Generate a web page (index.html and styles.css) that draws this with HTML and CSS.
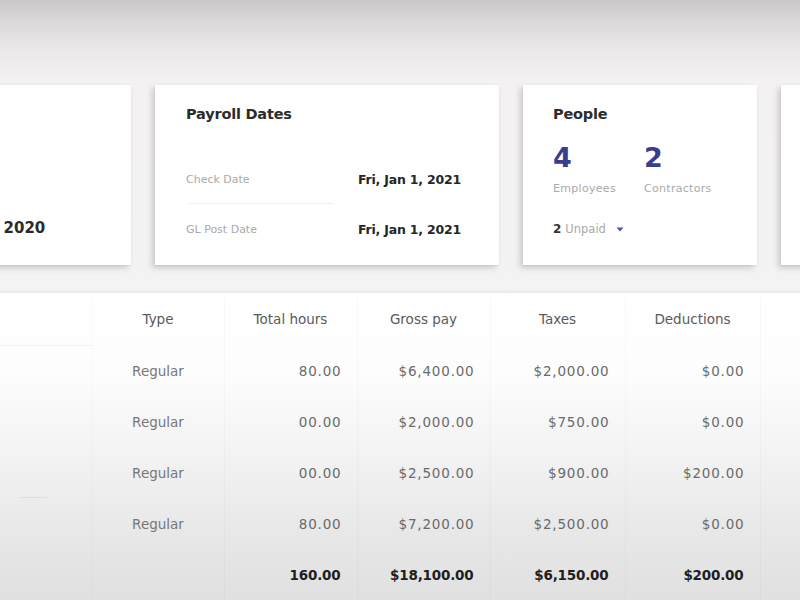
FILE: index.html
```html
<!DOCTYPE html>
<html>
<head>
<meta charset="utf-8">
<link rel="stylesheet" href="styles.css">
</head>
<body>
<div class="page">
  <div class="cards">
    <div class="card card-a">
      <div class="period">Dec 17, 2020</div>
    </div>
    <div class="card card-b">
      <div class="card-title">Payroll Dates</div>
      <div class="date-row first">
        <span class="label">Check Date</span>
        <span class="value">Fri, Jan 1, 2021</span>
      </div>
      <div class="divider"></div>
      <div class="date-row">
        <span class="label">GL Post Date</span>
        <span class="value">Fri, Jan 1, 2021</span>
      </div>
    </div>
    <div class="card card-c">
      <div class="card-title">People</div>
      <div class="counts">
        <div class="count first-count">
          <div class="num">4</div>
          <div class="label">Employees</div>
        </div>
        <div class="count">
          <div class="num">2</div>
          <div class="label">Contractors</div>
        </div>
      </div>
      <div class="unpaid"><b>2</b> <span class="label">Unpaid</span>
        <svg class="caret" width="8" height="5" viewBox="0 0 8 5"><path d="M0.5 0.5 L7.5 0.5 L4 4.5 Z" fill="#4a55a8"/></svg>
      </div>
    </div>
    <div class="card card-d"></div>
  </div>

  <div class="table-wrap">
    <table class="grid">
      <colgroup>
        <col class="c0"><col class="c1"><col class="c2"><col class="c3"><col class="c4"><col class="c5"><col class="c6">
      </colgroup>
      <thead>
        <tr>
          <th class="first"></th><th>Type</th><th>Total hours</th><th>Gross pay</th><th>Taxes</th><th>Deductions</th><th class="last">Net pay</th>
        </tr>
      </thead>
      <tbody>
        <tr><td class="first"></td><td class="type">Regular</td><td>80.00</td><td>$6,400.00</td><td>$2,000.00</td><td>$0.00</td><td class="last">$4,400.00</td></tr>
        <tr><td class="first"></td><td class="type">Regular</td><td>00.00</td><td>$2,000.00</td><td>$750.00</td><td>$0.00</td><td class="last">$1,250.00</td></tr>
        <tr><td class="first"></td><td class="type">Regular</td><td>00.00</td><td>$2,500.00</td><td>$900.00</td><td>$200.00</td><td class="last">$1,400.00</td></tr>
        <tr><td class="first"></td><td class="type">Regular</td><td>80.00</td><td>$7,200.00</td><td>$2,500.00</td><td>$0.00</td><td class="last">$4,700.00</td></tr>
        <tr class="total"><td class="first"></td><td class="type"></td><td>160.00</td><td>$18,100.00</td><td>$6,150.00</td><td>$200.00</td><td class="last">$11,750.00</td></tr>
      </tbody>
    </table>
  </div>
</div>
</body>
</html>
```

FILE: styles.css
```css
* { box-sizing: border-box; }
html, body {
  margin: 0;
  padding: 0;
  width: 800px;
  height: 600px;
  overflow: hidden;
}
body {
  font-family: "DejaVu Sans", "Open Sans", sans-serif;
  color: #2a2a2a;
  background: linear-gradient(180deg, #ccc8c9 0px, #dedadb 25px, #ebe8e9 50px, #f3f1f2 80px, #f4f3f4 290px);
}
.page {
  width: 800px;
  height: 600px;
  overflow: hidden;
}
.cards {
  display: flex;
  gap: 24px;
  padding-top: 85px;
  margin-left: -69px;
  height: 265px;
}
.card {
  flex: none;
  height: 180px;
  background: #fff;
  box-shadow: -3px 3px 6px rgba(0,0,0,0.16), 0 1px 2px rgba(0,0,0,0.06);
}
.card-a {
  width: 200px;
  display: flex;
  flex-direction: column;
  justify-content: flex-end;
  padding: 0 0 28px 8px;
}
.period {
  font-weight: bold;
  font-size: 15px;
  color: #2a2a2a;
  margin-left: -4px;
}
.card-b {
  width: 344px;
  padding: 21px 38px 0 31px;
}
.card-title {
  font-weight: bold;
  font-size: 14.5px;
  color: #2c2c2c;
  letter-spacing: -0.2px;
}
.date-row {
  display: flex;
  justify-content: space-between;
  align-items: center;
  height: 20px;
}
.date-row.first { margin-top: 47px; }
.divider {
  height: 1px;
  margin: 14px 128px 15px 3px;
  background: #eeeeee;
}
.label {
  font-size: 11px;
  color: #a9a9a9;
}
.value {
  font-weight: bold;
  font-size: 12.5px;
  color: #262626;
  letter-spacing: -0.2px;
}
.card-c {
  width: 234px;
  padding: 21px 20px 0 30px;
}
.counts {
  display: flex;
  margin-top: 21px;
}
.count.first-count { width: 91px; }
.count .num {
  font-weight: bold;
  font-size: 27px;
  line-height: 30px;
  color: #3a3d8e;
}
.count .label {
  display: block;
  margin-top: 9px;
  letter-spacing: 0.3px;
}
.unpaid {
  margin-top: 27px;
  font-size: 12px;
  display: flex;
  align-items: center;
  gap: 4px;
}
.unpaid b { color: #333; }
.unpaid .label { font-size: 11.5px; }
.caret { margin-left: 6px; }
.card-d {
  width: 200px;
}
.table-wrap {
  margin-top: 28px;
  height: 307px;
  background: linear-gradient(180deg, #ffffff 0px, #fdfdfd 80px, #f3f3f3 160px, #e9e9e9 230px, #e0e0e0 307px);
  box-shadow: 0 -1px 3px rgba(0,0,0,0.06);
}
.grid {
  border-collapse: collapse;
  table-layout: fixed;
  width: 900px;
}
.c0 { width: 92px; }
.c1 { width: 132px; }
.c2 { width: 133px; }
.c3 { width: 133px; }
.c4 { width: 135px; }
.c5 { width: 135px; }
.c6 { width: 140px; }
.grid th, .grid td {
  height: 51px;
  padding: 0 16px 0 0;
  border-left: 1px solid rgba(0,0,0,0.025);
  font-size: 13.5px;
  white-space: nowrap;
  overflow: hidden;
}
.grid th {
  font-weight: normal;
  color: #5a5a5a;
  text-align: center;
  padding: 0;
  height: 52px;
}
.grid td {
  text-align: right;
  color: #6a6a6a;
  letter-spacing: 0.8px;
  padding-right: 15px;
}
.grid td.type {
  text-align: center;
  padding: 0;
  color: #777;
  letter-spacing: 0;
}
.grid .first { border-left: none; }
.grid thead .first {
  border-bottom: 1px solid rgba(0,0,0,0.045);
}
.grid tbody tr:nth-child(3) .first {
  background: linear-gradient(90deg, transparent 20px, rgba(0,0,0,0.06) 20px, rgba(0,0,0,0.06) 47px, transparent 47px) bottom / 100% 1px no-repeat;
}
.grid .total td {
  font-weight: bold;
  color: #1e1e1e;
  letter-spacing: -0.2px;
  padding-right: 16px;
}
```
